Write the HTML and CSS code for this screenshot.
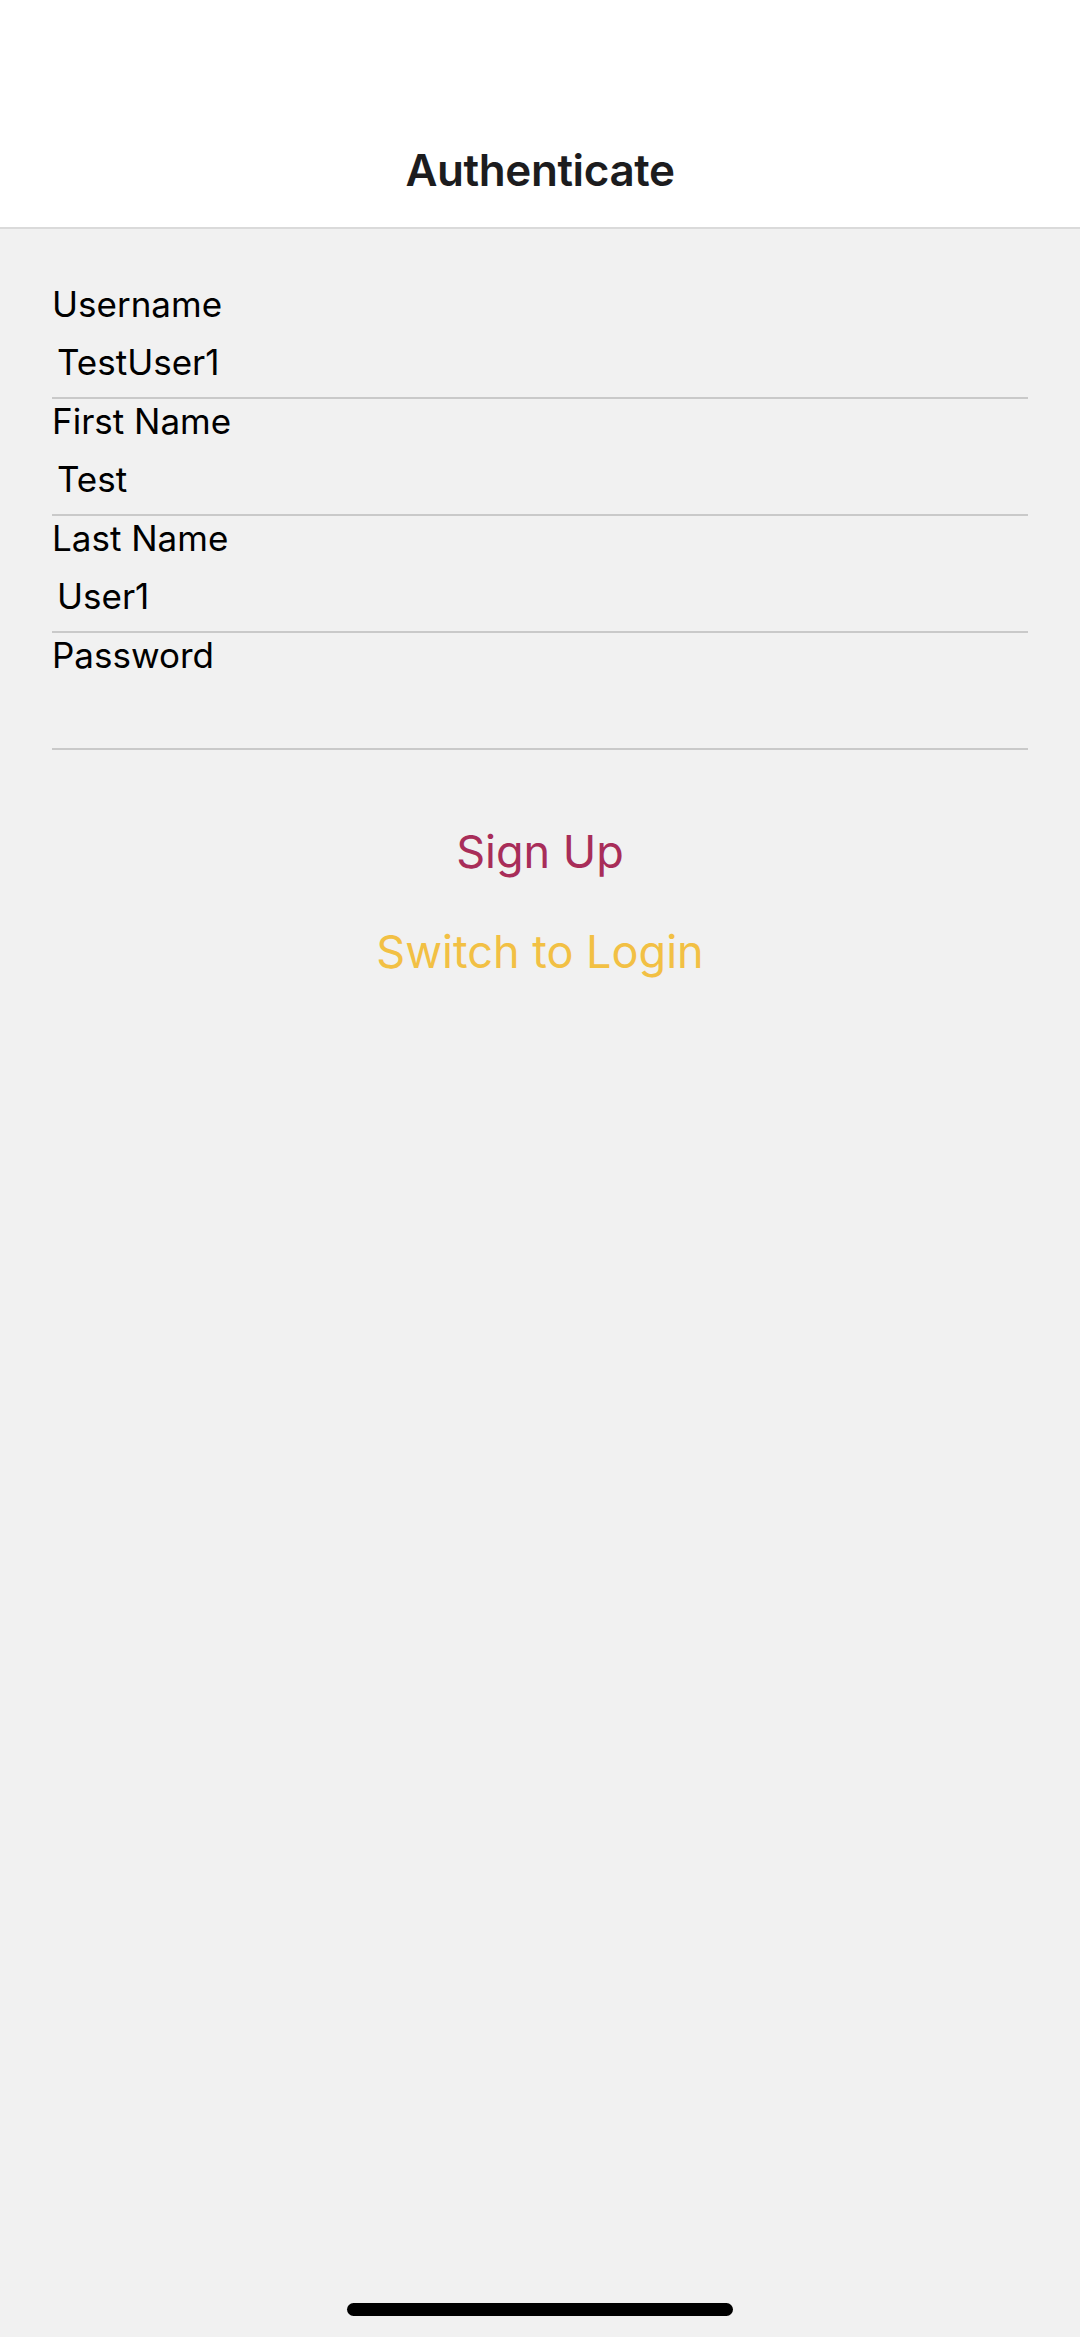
FILE: index.html
```html
<!DOCTYPE html>
<html lang="en">
<head>
<meta charset="utf-8">
<title>Authenticate</title>
<link rel="stylesheet" href="styles.css">
</head>
<body>
<div class="screen">
  <header class="nav">
    <h1 class="nav-title">Authenticate</h1>
  </header>
  <main class="form">
    <div class="field">
      <div class="label">Username</div>
      <div class="value">TestUser1</div>
    </div>
    <div class="field">
      <div class="label">First Name</div>
      <div class="value">Test</div>
    </div>
    <div class="field">
      <div class="label">Last Name</div>
      <div class="value">User1</div>
    </div>
    <div class="field">
      <div class="label">Password</div>
      <div class="value"></div>
    </div>
    <div class="actions">
      <button class="btn btn-primary" type="button">Sign Up</button>
      <button class="btn btn-secondary" type="button">Switch to Login</button>
    </div>
  </main>
  <div class="home-indicator"></div>
</div>
</body>
</html>
```
FILE: styles.css
```css
html, body {
  margin: 0;
  padding: 0;
}
body {
  background: #f1f1f1;
  font-family: Inter, "Noto Sans", "Liberation Sans", sans-serif;
  color: #000;
}
.screen {
  position: relative;
  min-height: 2337px;
  display: flex;
  flex-direction: column;
}
.nav {
  background: #ffffff;
  height: 229px;
  box-sizing: border-box;
  padding-top: 113px;
  border-bottom: 2px solid #dadada;
  display: flex;
  align-items: center;
  justify-content: center;
}
.nav-title {
  margin: 0;
  font-size: 44px;
  font-weight: 600;
  color: #1c1c1e;
  letter-spacing: -0.4px;
}
.form {
  padding: 53px 52px 0;
  display: flex;
  flex-direction: column;
}
.field {
  padding: 2px 0 15px;
  border-bottom: 2px solid #c9c9c9;
  display: flex;
  flex-direction: column;
  gap: 18px;
}
.label, .value {
  font-size: 35px;
  line-height: 40px;
  height: 40px;
}
.value {
  padding-left: 5px;
}
.actions {
  display: flex;
  flex-direction: column;
  align-items: center;
  gap: 42px;
  padding-top: 73px;
}
.btn {
  background: none;
  border: 0;
  padding: 0;
  font-family: inherit;
  font-size: 45px;
  line-height: 58px;
  font-weight: 400;
}
.btn-primary {
  color: #a82d59;
}
.btn-secondary {
  color: #f2c044;
}
.home-indicator {
  position: absolute;
  left: 347px;
  bottom: 21px;
  width: 386px;
  height: 13px;
  border-radius: 7px;
  background: #000;
}
```
